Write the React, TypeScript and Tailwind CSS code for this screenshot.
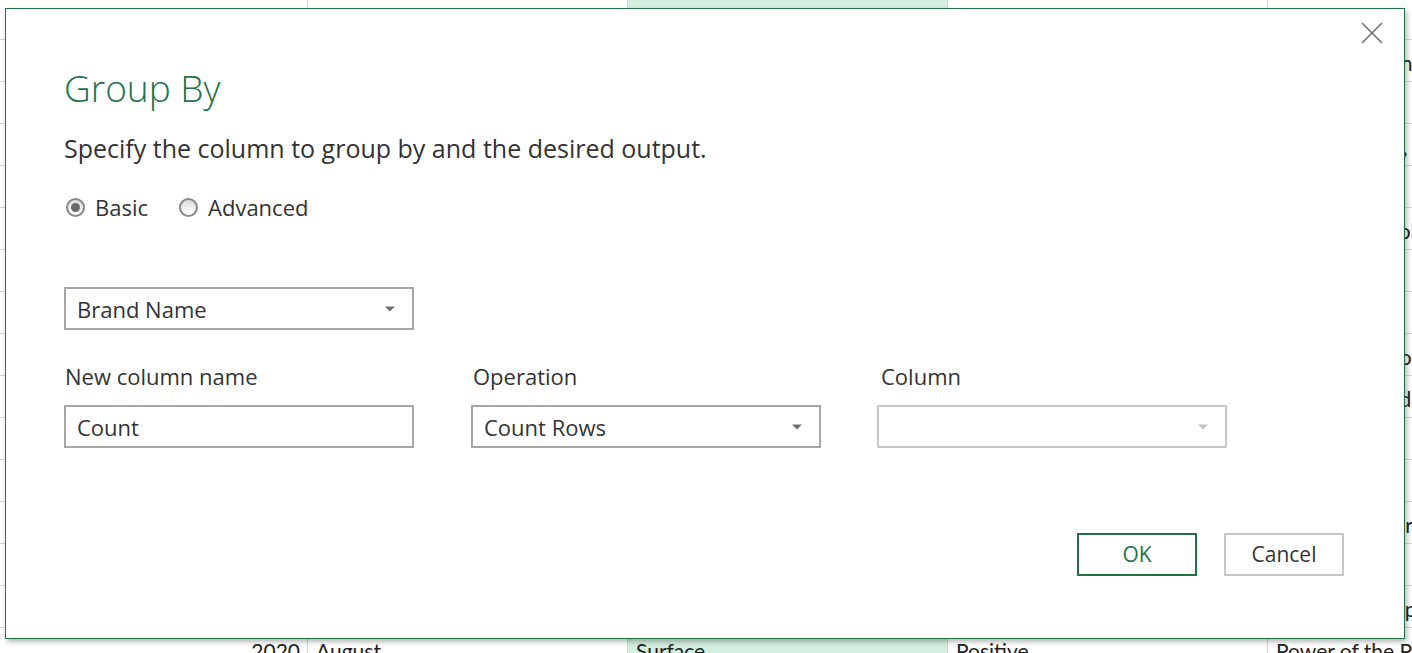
type Row = { a?: string; b?: string; c?: string; d?: string; e?: string };

// sheet rows behind the dialog; only the edges show
const sheet: Row[] = [
  {},
  { e: 'Great experience overall, see' },
  {},
  { e: 'Battery is fine, display is brilliant' },
  {},
  { e: 'Slim design, solid look and' },
  {},
  {},
  { e: 'Battery lasts longer than' },
  { e: 'Quiet fans and good keyboard' },
  {},
  {},
  { e: 'Great value for money. Did' },
  {},
  { e: 'Runs every app we needed, no' },
  { a: '2020', b: 'August', c: 'Surface', d: 'Positive', e: 'Power of the Pen' },
];

function Caret({ muted }: { muted?: boolean }) {
  return (
    <svg width="10" height="6" viewBox="0 0 10 6" className="shrink-0">
      <path d="M0 0.5h10L5 5.5z" fill={muted ? '#c2c2c2' : '#707070'} />
    </svg>
  );
}

function Select({ value, muted }: { value?: string; muted?: boolean }) {
  return (
    <div
      className={`flex h-[43px] w-[350px] items-center justify-between border-2 pl-[11px] pr-[17px] ${
        muted ? 'border-[#c6c6c6]' : 'border-[#a6a6a6]'
      }`}
    >
      <span className="leading-none">{value}</span>
      <Caret muted={muted} />
    </div>
  );
}

function Radio({ checked, label }: { checked?: boolean; label: string }) {
  return (
    <div className="flex items-center gap-[10px]">
      <div className="flex h-[19px] w-[19px] items-center justify-center rounded-full border-2 border-[#8a8a8a] bg-gradient-to-b from-[#dcdcdc] to-white">
        {checked && <div className="h-[9px] w-[9px] rounded-full bg-[#6a6a6a]" />}
      </div>
      <span className="leading-none">{label}</span>
    </div>
  );
}

export default function App() {
  return (
    <div className="relative h-[653px] w-[1412px] overflow-hidden bg-white">
      {/* spreadsheet */}
      <div className="-mt-[2px] flex flex-col font-['Lato',sans-serif] text-[21px] text-[#222]">
        {sheet.map((r, i) => (
          <div key={i} className="flex h-[42px] shrink-0 border-b border-[#d4d4d4]">
            <div className="w-[308px] shrink-0 border-r border-[#d4d4d4] pr-[7px] pt-[12px] text-right leading-none">{r.a}</div>
            <div className="w-[320px] shrink-0 border-r border-[#d4d4d4] pl-[8px] pt-[12px] leading-none">{r.b}</div>
            <div className="w-[320px] shrink-0 border-r border-[#c6dccf] bg-[#d4efdf] pl-[8px] pt-[12px] leading-none">{r.c}</div>
            <div className="w-[320px] shrink-0 border-r border-[#d4d4d4] pl-[8px] pt-[12px] leading-none">{r.d}</div>
            <div className="flex-1 whitespace-nowrap pl-[8px] pt-[12px] leading-none">{r.e}</div>
          </div>
        ))}
      </div>

      {/* dialog */}
      <div className="absolute left-[5px] top-[8px] flex h-[631px] w-[1400px] flex-col border border-[#217346] bg-white font-['Open_Sans',sans-serif] text-[22px] text-[#333] shadow-[2px_3px_5px_rgba(0,0,0,0.28)]">
        <div className="flex justify-end pr-[21px] pt-[13px]">
          <svg width="22" height="22" viewBox="0 0 22 22">
            <path d="M1 1L21 21M21 1L1 21" stroke="#707070" strokeWidth="1.6" />
          </svg>
        </div>

        <div className="pl-[58px]">
          <h1 className="mt-[25px] text-[37px] font-light leading-none text-[#217346]">Group By</h1>
          <p className="mt-[30px] text-[25px] leading-none">Specify the column to group by and the desired output.</p>

          <div className="mt-[35px] flex h-[22px] items-center pl-[2px]">
            <Radio checked label="Basic" />
            <div className="ml-[31px]">
              <Radio label="Advanced" />
            </div>
          </div>

          <div className="mt-[69px]">
            <Select value="Brand Name" />
          </div>

          <div className="mt-[35px] flex">
            <div className="w-[407px] shrink-0">
              <div className="pl-[1px] leading-none">New column name</div>
              <div className="mt-[18px] flex h-[43px] w-[350px] items-center border-2 border-[#a6a6a6] pl-[11px]">
                <span className="leading-none">Count</span>
              </div>
            </div>
            <div className="w-[406px] shrink-0">
              <div className="pl-[2px] leading-none">Operation</div>
              <div className="mt-[18px]">
                <Select value="Count Rows" />
              </div>
            </div>
            <div className="w-[350px] shrink-0">
              <div className="pl-[4px] leading-none">Column</div>
              <div className="mt-[18px]">
                <Select muted />
              </div>
            </div>
          </div>
        </div>

        <div className="mt-[85px] flex justify-end gap-[27px] pr-[60px]">
          <button className="flex h-[43px] w-[120px] items-center justify-center border-2 border-[#217346] text-[21px] leading-none text-[#217346]">
            OK
          </button>
          <button className="flex h-[43px] w-[120px] items-center justify-center border-2 border-[#c6c6c6] text-[21px] leading-none text-[#333]">
            Cancel
          </button>
        </div>
      </div>
    </div>
  );
}
